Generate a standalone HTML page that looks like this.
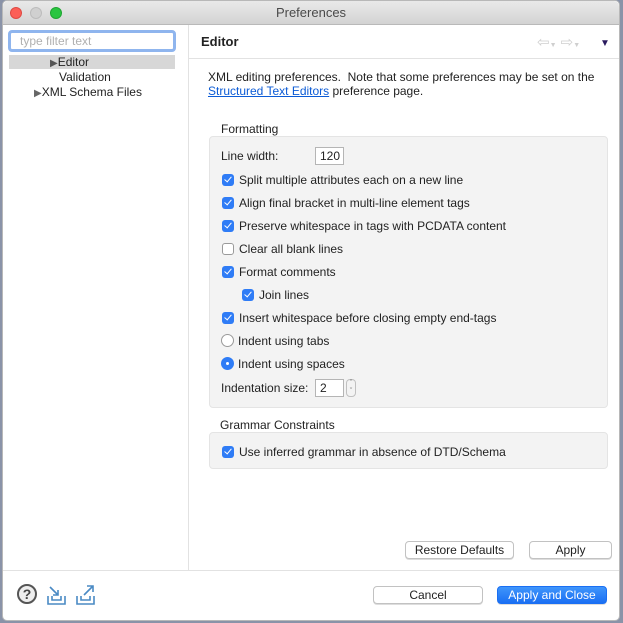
<!DOCTYPE html>
<html><head><style>
*{box-sizing:border-box;margin:0;padding:0}
body{width:623px;height:623px;background:#8a93a8;font-family:"Liberation Sans",sans-serif;font-size:12px;color:#222;position:relative;overflow:hidden}
.abs{position:absolute}
.win{position:absolute;left:0;top:0;width:623px;height:623px;overflow:hidden}
.frame{position:absolute;left:2px;top:0;width:618px;height:621px;background:#fff;border-radius:5px;border:1px solid #b8b8b8}
.title{position:absolute;left:3px;top:1px;width:616px;height:24px;background:linear-gradient(#e9e9e9,#d3d3d3);border-bottom:1px solid #b9b9b9;border-radius:5px 5px 0 0;text-align:center;font-size:13px;line-height:24px;color:#4a4a4a}
.dot{position:absolute;top:7px;width:12px;height:12px;border-radius:50%}
.row{position:absolute;left:222px;height:14px;line-height:14px;white-space:nowrap}
.cb{display:inline-block;width:12px;height:12px;border-radius:3px;background:#2f7cf6;vertical-align:-2px;margin-right:5px;position:relative}
.cb:after{content:"";position:absolute;left:4px;top:1px;width:3px;height:6px;border:solid #fff;border-width:0 1.6px 1.6px 0;transform:rotate(40deg)}
.cb.off{background:#fff;border:1px solid #9a9a9a}.cb.off:after{display:none}
.rad{display:inline-block;width:13px;height:13px;border-radius:50%;border:1px solid #9a9a9a;background:#fff;vertical-align:-2px;margin-right:4px;position:relative}
.rad.on{background:#2f7cf6;border-color:#2f7cf6}.rad.on:after{content:"";position:absolute;left:4px;top:4px;width:3px;height:3px;border-radius:50%;background:#fff}
.grp{position:absolute;left:209px;width:399px;background:#f3f3f3;border:1px solid #e4e4e4;border-radius:4px}
.btn{position:absolute;height:18px;border:1px solid #c2c2c2;border-radius:4px;background:#fff;text-align:center;line-height:16px;font-size:12px;box-shadow:0 1px 0 #ddd}
.inp{display:inline-block;border:1px solid #b5b5b5;background:#fff;height:18px;line-height:16px;padding-left:4px;vertical-align:middle}
</style></head><body>
<div class="win">
<div class="frame"></div>
<div class="title">Preferences</div>
<div class="dot" style="left:10px;background:#fc5f57;border:1px solid #de4a43"></div>
<div class="dot" style="left:30px;background:#d0d0d0;border:1px solid #bcbcbc"></div>
<div class="dot" style="left:50px;background:#29c540;border:1px solid #1fa532"></div>
<div class="abs" style="left:8px;top:30px;width:168px;height:22px;border:3px solid #8fb5ee;border-radius:4px;background:#fff;color:#b0b0b0;padding-left:9px;line-height:16px">type filter text</div>
<div class="abs" style="left:9px;top:55px;width:166px;height:14px;background:#d7d7d7"></div>
<div class="abs" style="left:50px;top:55px;line-height:14px"><span style="color:#555;font-size:10px">▶</span>Editor</div>
<div class="abs" style="left:59px;top:70px;line-height:14px">Validation</div>
<div class="abs" style="left:34px;top:85px;line-height:14px"><span style="color:#666;font-size:10px">▶</span>XML Schema Files</div>
<div class="abs" style="left:188px;top:25px;width:1px;height:545px;background:#e2e2e2"></div>
<div class="abs" style="left:201px;top:34px;font-weight:bold;font-size:13px">Editor</div>
<div class="abs" style="left:537px;top:33px;color:#cfcfcf;font-size:15px">⇦<span style="font-size:7px">▼</span> ⇨<span style="font-size:7px">▼</span></div>
<div class="abs" style="left:600px;top:38px;color:#2a1a5e;font-size:10px">▼</div>
<div class="abs" style="left:189px;top:58px;width:430px;height:1px;background:#e2e2e2"></div>
<div class="abs" style="left:208px;top:70px;line-height:14px">XML editing preferences.&nbsp; Note that some preferences may be set on the<br><span style="color:#0b5bd6;text-decoration:underline">Structured Text Editors</span> preference page.</div>
<div class="abs" style="left:221px;top:122px">Formatting</div>
<div class="grp" style="top:136px;height:272px"></div>
<div class="row" style="left:221px;top:147px;height:18px;line-height:18px">Line width:<span class="inp" style="position:absolute;left:94px;top:0;width:29px">120</span></div>
<div class="row" style="top:173px"><span class="cb"></span>Split multiple attributes each on a new line</div>
<div class="row" style="top:196px"><span class="cb"></span>Align final bracket in multi-line element tags</div>
<div class="row" style="top:219px"><span class="cb"></span>Preserve whitespace in tags with PCDATA content</div>
<div class="row" style="top:242px"><span class="cb off"></span>Clear all blank lines</div>
<div class="row" style="top:265px"><span class="cb"></span>Format comments</div>
<div class="row" style="left:242px;top:288px"><span class="cb"></span>Join lines</div>
<div class="row" style="top:311px"><span class="cb"></span>Insert whitespace before closing empty end-tags</div>
<div class="row" style="left:221px;top:334px"><span class="rad"></span>Indent using tabs</div>
<div class="row" style="left:221px;top:357px"><span class="rad on"></span>Indent using spaces</div>
<div class="row" style="left:221px;top:379px;height:18px;line-height:18px">Indentation size:<span class="inp" style="position:absolute;left:94px;top:0;width:29px">2</span><span style="position:absolute;left:125px;top:0;width:10px;height:18px;border:1px solid #c0c0c0;border-radius:4px;font-size:7px;line-height:8px;text-align:center;color:#555">ˆ<br>ˇ</span></div>
<div class="abs" style="left:220px;top:418px">Grammar Constraints</div>
<div class="grp" style="top:432px;height:37px"></div>
<div class="row" style="top:445px"><span class="cb"></span>Use inferred grammar in absence of DTD/Schema</div>
<div class="btn" style="left:405px;top:541px;width:109px">Restore Defaults</div>
<div class="btn" style="left:529px;top:541px;width:83px">Apply</div>
<div class="abs" style="left:3px;top:570px;width:616px;height:1px;background:#e2e2e2"></div>
<div class="abs" style="left:17px;top:584px;width:20px;height:20px;border-radius:50%;border:2px solid #555;text-align:center;font-weight:bold;font-size:14px;line-height:16px;color:#444;background:#eee">?</div>
<svg class="abs" style="left:45px;top:584px" width="60" height="22"><g fill="none" stroke="#4a8ac4" stroke-width="1.6"><path d="M3 12v8h17v-8M7 12v4h9v-4"/><path d="M5 3l8 8M13 6v5H8"/><path d="M32 12v8h17v-8M36 12v4h9v-4"/><path d="M39 11l9-9M42 2h6v6"/></g></svg>
<div class="btn" style="left:373px;top:586px;width:110px">Cancel</div>
<div class="btn" style="left:497px;top:586px;width:110px;background:linear-gradient(#3f95fb,#1a6ff3);border-color:#1a6ff3;color:#fff">Apply and Close</div>
</div>
</body></html>
